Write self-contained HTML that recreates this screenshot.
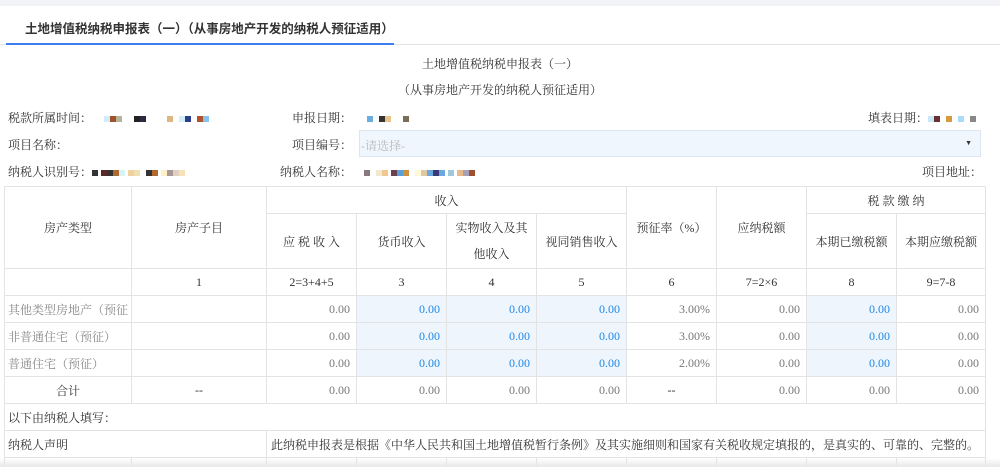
<!DOCTYPE html><html><head><meta charset="utf-8"><style>
*{margin:0;padding:0;box-sizing:border-box}
html,body{width:1000px;height:467px;overflow:hidden}
body{background:#fff;font-family:"Liberation Serif","Noto Serif CJK SC",serif;font-size:12px;color:#333;position:relative}
.a{position:absolute;white-space:nowrap}
.px{display:inline-block;width:6px;height:6px;vertical-align:middle}
table{position:absolute;left:4px;top:186px;border-collapse:collapse;table-layout:fixed}
td{border:1px solid #e3e3e3;text-align:center;height:27px;padding:0 6px;white-space:nowrap;overflow:hidden}
.r{text-align:right;color:#777}.b{background:#eef5fd;color:#1e88e5;text-align:right}.g{color:#888;text-align:left}.l{text-align:left}
</style></head><body>
<div class="a" style="left:0;top:0;width:1000px;height:6px;background:#f2f3f6"></div>
<div class="a" style="left:25px;top:18px;font-size:12.5px;font-family:'Liberation Sans','Noto Sans CJK SC',sans-serif;font-weight:bold;color:#333">土地增值税纳税申报表（一）（从事房地产开发的纳税人预征适用）</div>
<div class="a" style="left:0;top:44px;width:1000px;height:1px;background:#e3e3e3"></div>
<div class="a" style="left:6px;top:43px;width:388px;height:2px;background:#3d7ff0"></div>
<div class="a" style="left:0;top:55px;width:1000px;text-align:center">土地增值税纳税申报表（一）</div>
<div class="a" style="left:0;top:81px;width:1000px;text-align:center">（从事房地产开发的纳税人预征适用）</div>
<div class="a" style="left:8px;top:109px">税款所属时间：<span style="margin-left:12px"></span><span class="px" style="background:#cfeefa"></span><span class="px" style="background:#a0522d"></span><span class="px" style="background:#b8b49a"></span>&nbsp;&nbsp;&nbsp;&nbsp;<span class="px" style="background:#222"></span><span class="px" style="background:#2a2a40"></span>&nbsp;&nbsp;&nbsp;&nbsp;&nbsp;&nbsp;&nbsp;<span class="px" style="background:#e0b680"></span>&nbsp;&nbsp;<span class="px" style="background:#cfeefa"></span><span class="px" style="background:#2b3e8a"></span>&nbsp;&nbsp;<span class="px" style="background:#b0522d"></span><span class="px" style="background:#86c4f0"></span></div>
<div class="a" style="left:292px;top:109px">申报日期：&nbsp;&nbsp;&nbsp;&nbsp;&nbsp;<span class="px" style="background:#6aaee0"></span>&nbsp;&nbsp;<span class="px" style="background:#333"></span><span class="px" style="background:#e8c48a"></span>&nbsp;&nbsp;&nbsp;&nbsp;<span class="px" style="background:#7a6e58"></span></div>
<div class="a" style="left:868px;top:109px">填表日期：<span class="px" style="background:#c8e8fa"></span><span class="px" style="background:#6a3030"></span>&nbsp;&nbsp;<span class="px" style="background:#d89a40"></span>&nbsp;&nbsp;<span class="px" style="background:#a8dcf8"></span>&nbsp;&nbsp;<span class="px" style="background:#888"></span></div>
<div class="a" style="left:8px;top:136px">项目名称：</div>
<div class="a" style="left:292px;top:136px">项目编号：</div>
<div class="a" style="left:359px;top:130px;width:622px;height:27px;background:#eff6fe;border:1px solid #dde6f0;color:#bbb;padding:6px 1px">-请选择-<span style="position:absolute;right:8px;top:8px;color:#333;font-size:7px">▼</span></div>
<div class="a" style="left:8px;top:163px">纳税人识别号：<span class="px" style="background:#333"></span>&nbsp;<span class="px" style="background:#5a2a2a"></span><span class="px" style="background:#333"></span><span class="px" style="background:#b06a30"></span><span class="px" style="background:#d8f2fa"></span>&nbsp;<span class="px" style="background:#f0d0a0"></span><span class="px" style="background:#f0e0b0"></span>&nbsp;&nbsp;<span class="px" style="background:#333"></span><span class="px" style="background:#b06a30"></span>&nbsp;<span class="px" style="background:#fff0c8"></span><span class="px" style="background:#a89898"></span><span class="px" style="background:#e0d0c0"></span><span class="px" style="background:#f8e0b8"></span></div>
<div class="a" style="left:280px;top:163px">纳税人名称：&nbsp;&nbsp;&nbsp;&nbsp;<span class="px" style="background:#887880"></span>&nbsp;&nbsp;<span class="px" style="background:#f0e8d0"></span><span class="px" style="background:#f0c890"></span>&nbsp;<span class="px" style="background:#6a4050"></span><span class="px" style="background:#5aa0d8"></span><span class="px" style="background:#d09040"></span>&nbsp;&nbsp;<span class="px" style="background:#fff8d8"></span><span class="px" style="background:#e0c8a0"></span><span class="px" style="background:#6aa8e0"></span><span class="px" style="background:#3a3a78"></span><span class="px" style="background:#6aa8e0"></span>&nbsp;<span class="px" style="background:#a0c8d8"></span>&nbsp;<span class="px" style="background:#e8b888"></span><span class="px" style="background:#a8a0b8"></span><span class="px" style="background:#a05030"></span></div>
<div class="a" style="left:922px;top:163px">项目地址：</div>
<table>
<colgroup><col style="width:126px"><col style="width:135px"><col style="width:90px"><col style="width:90px"><col style="width:90px"><col style="width:90px"><col style="width:90px"><col style="width:90px"><col style="width:90px"><col style="width:89px"></colgroup>
<tr style="height:26px"><td rowspan="2" style="height:81px">房产类型</td><td rowspan="2">房产子目</td><td colspan="4">收入</td><td rowspan="2">预征率（%）</td><td rowspan="2">应纳税额</td><td colspan="2">税 款 缴 纳</td></tr>
<tr style="height:55px"><td>应 税 收 入</td><td>货币收入</td><td style="line-height:26px;white-space:normal">实物收入及其他收入</td><td>视同销售收入</td><td>本期已缴税额</td><td>本期应缴税额</td></tr>
<tr style="height:27px"><td></td><td>1</td><td>2=3+4+5</td><td>3</td><td>4</td><td>5</td><td>6</td><td>7=2×6</td><td>8</td><td>9=7-8</td></tr>
<tr><td class="g" style="padding:0 3px">其他类型房地产（预征</td><td></td><td class="r">0.00</td><td class="b">0.00</td><td class="b">0.00</td><td class="b">0.00</td><td class="r">3.00%</td><td class="r">0.00</td><td class="b">0.00</td><td class="r">0.00</td></tr>
<tr><td class="g" style="padding:0 3px">非普通住宅（预征）</td><td></td><td class="r">0.00</td><td class="b">0.00</td><td class="b">0.00</td><td class="b">0.00</td><td class="r">3.00%</td><td class="r">0.00</td><td class="b">0.00</td><td class="r">0.00</td></tr>
<tr><td class="g" style="padding:0 3px">普通住宅（预征）</td><td></td><td class="r">0.00</td><td class="b">0.00</td><td class="b">0.00</td><td class="b">0.00</td><td class="r">2.00%</td><td class="r">0.00</td><td class="b">0.00</td><td class="r">0.00</td></tr>
<tr><td>合计</td><td>--</td><td class="r">0.00</td><td class="r">0.00</td><td class="r">0.00</td><td class="r">0.00</td><td>--</td><td class="r">0.00</td><td class="r">0.00</td><td class="r">0.00</td></tr>
<tr><td colspan="10" class="l" style="padding:0 3px">以下由纳税人填写：</td></tr>
<tr><td colspan="2" class="l" style="padding:0 3px">纳税人声明</td><td colspan="8" class="l" style="padding:0 4px">此纳税申报表是根据《中华人民共和国土地增值税暂行条例》及其实施细则和国家有关税收规定填报的，是真实的、可靠的、完整的。</td></tr>
<tr><td></td><td></td><td></td><td></td><td></td><td></td><td></td><td></td><td></td><td></td></tr>
</table>
<div class="a" style="left:0;top:458px;width:1000px;height:9px;background:linear-gradient(#fff0,#e8e8e8)"></div>
</body></html>
